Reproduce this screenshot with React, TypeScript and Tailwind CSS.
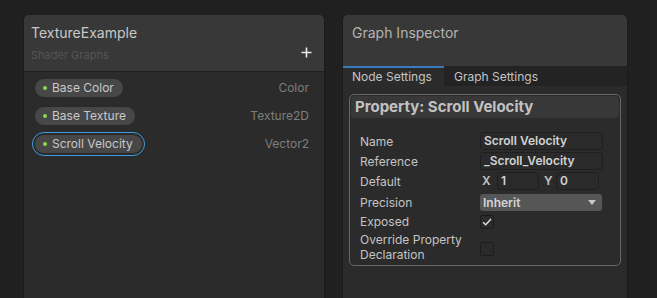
import React from "react";

const font = { fontFamily: "Inter, 'Noto Sans', sans-serif" };

function Pill({ label, selected }: { label: string; selected?: boolean }) {
  return (
    <div
      className={
        "flex items-center h-[20px] rounded-full bg-[#474747] pl-[8px] pr-[9px] border " +
        (selected ? "border-[#2a2a2a] outline outline-[1.5px] outline-[#3a9fe0] outline-offset-[1px]" : "border-[#2a2a2a]")
      }
    >
      <span className="w-[4px] h-[4px] rounded-full bg-[#8ed84a] mr-[5px]" />
      <span className="text-[12px] text-[#c8c8c8] leading-none">{label}</span>
    </div>
  );
}

function Row({ label, children, cls }: { label: React.ReactNode; children?: React.ReactNode; cls?: string }) {
  return (
    <div className={"flex items-center " + (cls || "")}>
      <div className="w-[120px] text-[12px] text-[#c4c4c4] leading-[15px]">{label}</div>
      <div className="flex-1 flex items-center">{children}</div>
    </div>
  );
}

function Field({ value, w }: { value: string; w: string }) {
  return (
    <div
      className={
        "h-[18px] rounded-[3px] bg-[#2a2a2a] border border-[#1f1f1f] px-[3px] flex items-center text-[12px] text-[#d2d2d2] font-semibold " +
        w
      }
    >
      {value}
    </div>
  );
}

export default function App() {
  return (
    <div className="w-[657px] h-[298px] bg-[#202020] flex pl-[23px] pt-[15px] overflow-hidden" style={font}>
      {/* Left panel */}
      <div className="w-[302px] h-[290px] bg-[#2b2b2b] rounded-t-[5px] border-x border-[#1b1b1b] flex flex-col">
        <div className="h-[57px] bg-[#383838] rounded-t-[5px] border-b border-[#1f1f1f] relative pl-[7px]">
          <div className="pt-[8px] text-[14px] text-[#c8c8c8] leading-[20px]">TextureExample</div>
          <div className="pt-[5px] text-[11px] text-[#555555] leading-[14px]">Shader Graphs</div>
          <svg
            className="absolute right-[12px] top-[32px]"
            width="11"
            height="11"
            viewBox="0 0 11 11"
          >
            <path d="M5.5 0.5 V10.5 M0.5 5.5 H10.5" stroke="#e8e8e8" strokeWidth="1.6" />
          </svg>
        </div>
        <div className="flex flex-col gap-[8px] pt-[6px] pl-[10px] pr-[15px]">
          <div className="flex items-center justify-between">
            <Pill label="Base Color" />
            <span className="text-[12px] text-[#7e7e7e]">Color</span>
          </div>
          <div className="flex items-center justify-between">
            <Pill label="Base Texture" />
            <span className="text-[12px] text-[#7e7e7e]">Texture2D</span>
          </div>
          <div className="flex items-center justify-between">
            <Pill label="Scroll Velocity" selected />
            <span className="text-[12px] text-[#7e7e7e]">Vector2</span>
          </div>
        </div>
      </div>

      {/* Right panel */}
      <div className="ml-[17px] w-[286px] h-[290px] bg-[#2b2b2b] rounded-t-[5px] border-x border-[#1b1b1b] flex flex-col">
        <div className="h-[51px] bg-[#383838] rounded-t-[5px] pl-[9px] pt-[9px]">
          <div className="text-[14px] text-[#b4b4b4] leading-[18px]">Graph Inspector</div>
        </div>
        <div className="h-[20px] bg-[#232323] flex">
          <div className="w-[101px] bg-[#2b2b2b] border-t-2 border-[#3a79bb] pl-[9px] text-[12px] text-[#c4c4c4] leading-[17px]">
            Node Settings
          </div>
          <div className="pl-[10px] text-[12px] text-[#c4c4c4] leading-[19px] pt-[1px]">Graph Settings</div>
        </div>
        <div className="mx-[6px] mt-[8px] h-[172px] border border-[#666666] rounded-[5px] flex flex-col">
          <div className="mx-[1px] mt-[1px] h-[22px] bg-[#383838] rounded-[4px] pl-[4px] text-[15px] font-bold text-[#c2c2c2] leading-[22px]">
            Property: Scroll Velocity
          </div>
          <div className="pl-[10px] pt-[14px] flex flex-col gap-[2px]">
            <Row label="Name">
              <Field value="Scroll Velocity" w="w-[123px]" />
            </Row>
            <Row label="Reference">
              <Field value="_Scroll_Velocity" w="w-[123px]" />
            </Row>
            <Row label="Default">
              <span className="text-[12px] text-[#c4c4c4] w-[17px] pl-[2px] font-semibold">X</span>
              <Field value="1" w="w-[42px]" />
              <span className="text-[12px] text-[#c4c4c4] w-[17px] pl-[5px] font-semibold">Y</span>
              <Field value="0" w="w-[43px]" />
            </Row>
            <Row label="Precision" cls="mt-[1px]">
              <div className="mt-[1px] w-[122px] h-[17px] rounded-[3px] bg-[#565656] flex items-center justify-between px-[3px]">
                <span className="text-[12px] font-semibold text-[#d4d4d4]">Inherit</span>
                <svg width="8" height="5" viewBox="0 0 8 5" className="mr-[3px]">
                  <path d="M0 0 H8 L4 5 Z" fill="#c8c8c8" />
                </svg>
              </div>
            </Row>
            <Row label="Exposed" cls="mt-[1px]">
              <div className="w-[14px] h-[14px] rounded-[2px] bg-[#2a2a2a] border border-[#1c1c1c] flex items-center justify-center">
                <svg width="10" height="8" viewBox="0 0 10 8">
                  <path d="M1 4.2 L3.7 6.8 L9 1" stroke="#e0e0e0" strokeWidth="1.4" fill="none" />
                </svg>
              </div>
            </Row>
            <Row label={<>Override Property<br />Declaration</>} cls="mt-[1px]">
              <div className="mt-[3px] w-[14px] h-[14px] rounded-[2px] bg-[#2a2a2a] border border-[#1c1c1c]" />
            </Row>
          </div>
        </div>
      </div>
    </div>
  );
}
